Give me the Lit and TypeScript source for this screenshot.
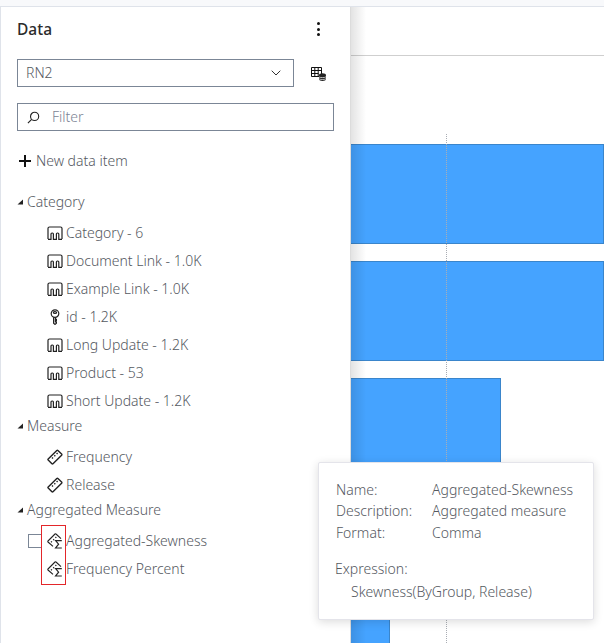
import { LitElement, html, css, svg } from "lit";
import { customElement } from "lit/decorators.js";

const catIcon = html`<svg class="ic" viewBox="0 0 16 16" width="16" height="16" fill="none" stroke="#222" stroke-width="1.2"><path d="M1 14V3.5C1 2.7 1.7 2 2.5 2h11c.8 0 1.5.7 1.5 1.5V14"/><path d="M1 14.4h3V9a1 1 0 0 1 1-1h.4a1 1 0 0 1 1 1v5.4h3V9a1 1 0 0 1 1-1h.4a1 1 0 0 1 1 1v5.4H15"/></svg>`;
const keyIcon = html`<svg class="ic" viewBox="0 0 16 16" width="16" height="16" fill="none" stroke="#222" stroke-width="1.2"><circle cx="8" cy="4.6" r="3.8"/><ellipse cx="8" cy="3.4" rx="1.6" ry=".9"/><path d="M6.6 8.2v6L8 15.4l1.4-1.2V13H8.4v-1.4h1V10.4h-1V8.6"/></svg>`;
const ruler = svg`<path d="M1.2 10 9.8 1.4a.8.8 0 0 1 1.1 0l3.7 3.7a.8.8 0 0 1 0 1.1L6 14.8a.8.8 0 0 1-1.1 0L1.2 11.1a.8.8 0 0 1 0-1.1Z"/>`;
const measureIcon = html`<svg class="ic" viewBox="0 0 16 16" width="16" height="16" fill="none" stroke="#222" stroke-width="1.4">${ruler}<path d="M5 8.6l1 1M7.3 6.3l1 1M9.6 4l1 1" stroke-width="1.4"/></svg>`;
const aggIcon = html`<svg class="ic" viewBox="0 0 16 16" width="16" height="16" fill="none" stroke="#222" stroke-width="1.1"><path d="M6 13.4 1 9a.7.7 0 0 1 0-1L8 1a.7.7 0 0 1 1 0l5 4.6"/><path d="M4 8.4l.9.9M6.2 6.2l.9.9M8.4 4l.9.9" stroke-width="1.3"/><path d="M14.8 7.6H8.6l3 3.6-3 3.8h6.2" stroke-width="1.2"/></svg>`;

const caret = html`<svg class="caret" viewBox="0 0 6 6" width="6" height="6"><path d="M6 0.5V5.5H0.5Z" fill="#222"/></svg>`;

interface Item { icon: unknown; label: string; check?: boolean }
const groups: { name: string; items: Item[] }[] = [
  { name: "Category", items: [
    { icon: catIcon, label: "Category - 6" },
    { icon: catIcon, label: "Document Link - 1.0K" },
    { icon: catIcon, label: "Example Link - 1.0K" },
    { icon: keyIcon, label: "id - 1.2K" },
    { icon: catIcon, label: "Long Update - 1.2K" },
    { icon: catIcon, label: "Product - 53" },
    { icon: catIcon, label: "Short Update - 1.2K" },
  ]},
  { name: "Measure", items: [
    { icon: measureIcon, label: "Frequency" },
    { icon: measureIcon, label: "Release" },
  ]},
  { name: "Aggregated Measure", items: [
    { icon: aggIcon, label: "Aggregated-Skewness", check: true },
    { icon: aggIcon, label: "Frequency Percent" },
  ]},
];

const bars = [253, 253, 150, 100, 39];

@customElement("app-root")
export class AppRoot extends LitElement {
  static styles = css`
    :host {
      display: block; position: relative; width: 604px; height: 643px; overflow: hidden;
      background: #fff; font-family: "Noto Sans", "Open Sans", sans-serif; font-size: 14px; font-weight: 300; color: #55595f;
    }
    * { box-sizing: border-box; }
    .t { padding-bottom: 1px; }
    .strip { height: 7px; background: #f8f9fb; border-bottom: 1px solid #dfe3ea; }
    .main { display: flex; height: 636px; }
    .panel { width: 351px; flex: none; border-left: 1px solid #dfe3ea; border-right: 1px solid #dcdcdc; padding: 0 16px; display: flex; flex-direction: column; background: #fff; }
    .head { display: flex; justify-content: space-between; align-items: center; height: 44px; padding-right: 14px; }
    .title { font-size: 15.5px; font-weight: 500; color: #2b2b2b; }
    .dots { display: flex; flex-direction: column; gap: 2.5px; }
    .dots i { width: 3px; height: 3px; border-radius: 50%; background: #111; display: block; }
    .selrow { display: flex; align-items: center; margin-top: 8px; gap: 17px; }
    .select { width: 277px; height: 28px; border: 1px solid #7b8696; display: flex; align-items: center; justify-content: space-between; padding: 0 12px 0 8px; }
    .filter { width: 317px; height: 28px; border: 1px solid #7b8696; display: flex; align-items: center; gap: 12px; padding-left: 9px; margin-top: 16px; color: #7b8494; }
    .new { display: flex; align-items: center; gap: 5px; margin-top: 19px; height: 22px; padding-left: 2px; }
    .tree { margin-top: 18px; }
    .ghead { display: flex; align-items: center; height: 24px; gap: 4px; margin-top: -1px; }
    .tree .ghead:first-child { margin-top: 0; }
    .items { padding: 5px 0 0 30px; }
    .row { position: relative; display: flex; align-items: center; height: 28px; gap: 3px; white-space: nowrap; }
    .ic { flex: none; }
    .check { position: absolute; left: -19px; top: 7px; width: 14px; height: 14px; border: 1px solid #7b8696; }
    .redbox { position: absolute; left: 41px; top: 525px; width: 25px; height: 60px; border: 1px solid #e3262a; }
    .chart { flex: 1; min-width: 0; position: relative; overflow: hidden; }
    .chart::before { content: ""; position: absolute; left: 0; top: 0; bottom: 0; width: 15px; background: linear-gradient(to right, rgba(0,0,0,.11), rgba(0,0,0,0)); z-index: 2; }
    .rule { height: 49px; border-bottom: 1px solid #cfcfcf; }
    .plot { padding-top: 88px; display: flex; flex-direction: column; gap: 17px; }
    .bar { height: 100px; flex: none; background: #45a3ff; border: 1px solid #3a85cb; border-left: none; }
    .vline { position: absolute; left: 95px; top: 127px; bottom: 0; border-left: 1px dotted #a9adb4; z-index: 1; }
    .tip { position: absolute; left: 318px; top: 462px; width: 276px; height: 158px; background: #fff; border: 1px solid #e4e4ea; border-radius: 2px; box-shadow: 0 2px 10px rgba(0,0,0,.14); padding: 16px 0 0 17px; z-index: 3; }
    .kv { display: grid; grid-template-columns: 96px auto; grid-auto-rows: 21.5px; align-items: center; }
    .expr { margin-top: 15px; height: 21px; display: flex; align-items: center; margin-left: -1px; }
    .exprv { margin-top: 2px; height: 21px; display: flex; align-items: center; padding-left: 15px; }
  `;

  render() {
    return html`
      <div class="strip"></div>
      <div class="main">
        <section class="panel">
          <div class="head">
            <div class="title">Data</div>
            <div class="dots"><i></i><i></i><i></i></div>
          </div>
          <div class="selrow">
            <div class="select">
              <span class="t">RN2</span>
              <svg viewBox="0 0 10 6" width="10" height="6" fill="none" stroke="#333" stroke-width="1"><path d="M.7.7 5 5 9.3.7"/></svg>
            </div>
            <svg viewBox="0 0 15 15" width="15" height="15" fill="none" stroke="#111">
              <path d="M.5 1.5h10v9H.5zM.5 4.5h10M.5 7.5h7M3.8 1.5v9M7.2 1.5v9" stroke-width="1"/>
              <ellipse cx="11.5" cy="8.8" rx="3.4" ry="1.6" fill="#222" stroke="none"/>
              <path d="M8.1 9v4.6c0 .9 1.5 1.4 3.4 1.4s3.4-.5 3.4-1.4V9" fill="#222" stroke="none"/>
              <path d="M8.1 10.9c.6.9 6.2.9 6.8 0M8.1 12.8c.6.9 6.2.9 6.8 0" stroke="#fff" stroke-width=".7"/>
            </svg>
          </div>
          <div class="filter">
            <svg viewBox="0 0 14 14" width="13" height="13" fill="none" stroke="#222" stroke-width="1.2"><circle cx="8.2" cy="5.8" r="4.4"/><path d="M5 9 1 13"/></svg>
            <span class="t">Filter</span>
          </div>
          <div class="new">
            <svg viewBox="0 0 12 12" width="12" height="12" fill="none" stroke="#111" stroke-width="2"><path d="M6 0v12M0 6h12"/></svg>
            <span class="t">New data item</span>
          </div>
          <div class="tree">
            ${groups.map((g) => html`
              <div class="ghead">${caret}<span class="t">${g.name}</span></div>
              <div class="items">
                ${g.items.map((it) => html`
                  <div class="row">
                    ${it.check ? html`<span class="check"></span>` : ""}
                    ${it.icon}<span class="t">${it.label}</span>
                  </div>`)}
              </div>`)}
          </div>
        </section>
        <section class="chart">
          <div class="rule"></div>
          <div class="plot">
            ${bars.map((w) => html`<div class="bar" style="width:${w}px"></div>`)}
          </div>
          <div class="vline"></div>
        </section>
      </div>
      <div class="redbox"></div>
      <div class="tip">
        <div class="kv">
          <span class="t">Name:</span><span class="t">Aggregated-Skewness</span>
          <span class="t">Description:</span><span class="t">Aggregated measure</span>
          <span class="t">Format:</span><span class="t">Comma</span>
        </div>
        <div class="expr t">Expression:</div>
        <div class="exprv t">Skewness(ByGroup, Release)</div>
      </div>
    `;
  }
}
